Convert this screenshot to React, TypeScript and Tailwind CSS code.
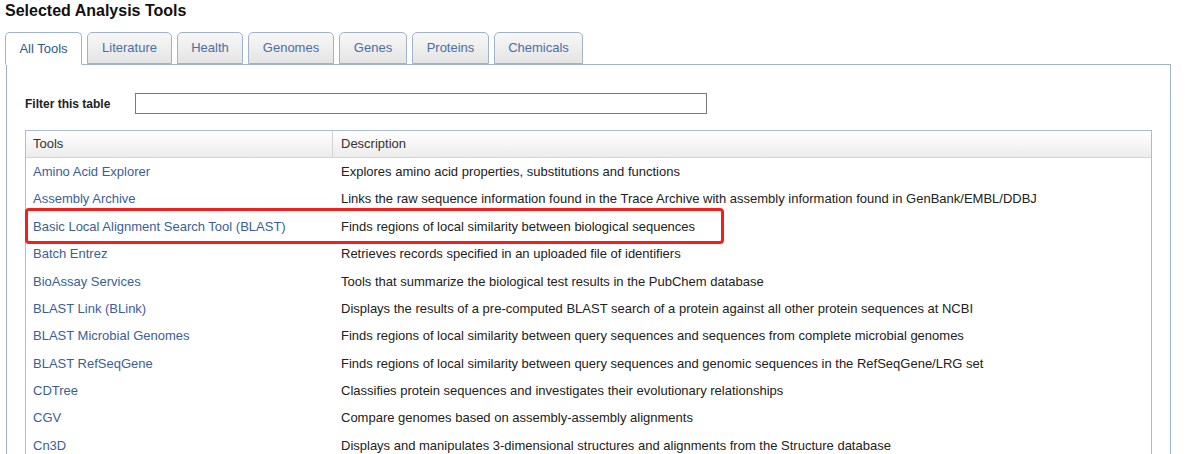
import * as React from "react";

const tabs = [
    { label: "All Tools", w: "w-[77px]", active: true },
    { label: "Literature", w: "w-[85px]" },
    { label: "Health", w: "w-[66px]" },
    { label: "Genomes", w: "w-[86px]" },
    { label: "Genes", w: "w-[68px]" },
    { label: "Proteins", w: "w-[77px]" },
    { label: "Chemicals", w: "w-[89px]" },
];

const rows = [
    ["Amino Acid Explorer", "Explores amino acid properties, substitutions and functions"],
    ["Assembly Archive", "Links the raw sequence information found in the Trace Archive with assembly information found in GenBank/EMBL/DDBJ"],
    ["Basic Local Alignment Search Tool (BLAST)", "Finds regions of local similarity between biological sequences"],
    ["Batch Entrez", "Retrieves records specified in an uploaded file of identifiers"],
    ["BioAssay Services", "Tools that summarize the biological test results in the PubChem database"],
    ["BLAST Link (BLink)", "Displays the results of a pre-computed BLAST search of a protein against all other protein sequences at NCBI"],
    ["BLAST Microbial Genomes", "Finds regions of local similarity between query sequences and sequences from complete microbial genomes"],
    ["BLAST RefSeqGene", "Finds regions of local similarity between query sequences and genomic sequences in the RefSeqGene/LRG set"],
    ["CDTree", "Classifies protein sequences and investigates their evolutionary relationships"],
    ["CGV", "Compare genomes based on assembly-assembly alignments"],
    ["Cn3D", "Displays and manipulates 3-dimensional structures and alignments from the Structure database"],
];

const App: React.FC = () => {
    return (
        <div className="w-[1187px] h-[454px] overflow-hidden bg-white font-['Liberation_Sans',Arial,sans-serif] text-[13px]">
            <h1 className="pl-[5px] pt-[1px] text-[16px] leading-[20px] font-bold text-[#111]">
                Selected Analysis Tools
            </h1>

            {/* tabs */}
            <div className="mt-[11px] pl-[5px] flex gap-[5px] h-[32px] relative z-10">
                {tabs.map((t) => (
                    <div
                        key={t.label}
                        className={`${t.w} h-[32px] flex items-center justify-center rounded-t-[5px] border border-[#9fb4cc] ${
                            t.active
                                ? "bg-white border-b-white h-[33px] text-[#2d5796]"
                                : "bg-gradient-to-b from-[#f7f7f7] via-[#eeeeee] to-[#e4e4e4] text-[#4a6ea8]"
                        }`}
                    >
                        {t.label}
                    </div>
                ))}
            </div>

            {/* panel */}
            <div className="ml-[6px] w-[1165px] h-[400px] border border-[#9fb4cc] px-[18px] pt-[28px]">
                <div className="flex items-center h-[21px]">
                    <label className="w-[110px] text-[12px] font-bold text-[#222]">Filter this table</label>
                    <input
                        type="text"
                        className="w-[572px] h-[21px] border border-[#7a7a7a] bg-white outline-none"
                    />
                </div>

                <div className="mt-[16px] border border-[#a8bdd4] text-[13px]">
                    <div className="flex h-[27px] border-b border-[#d3d3d3] bg-gradient-to-b from-white to-[#ececec] text-[#333]">
                        <div className="w-[306px] pl-[7px] flex items-center">Tools</div>
                        <div className="flex-1 pl-[8px] flex items-center border-l border-[#d3d3d3]">
                            Description
                        </div>
                    </div>
                    {rows.map(([tool, desc], i) => (
                        <div key={tool} className="relative flex h-[27.4px] items-center">
                            <div className="w-[307px] pl-[7px] text-[#3a5e9d]">{tool}</div>
                            <div className="flex-1 pl-[8px] text-[#222]">{desc}</div>
                            {i === 2 && (
                                <div className="absolute -left-[1px] -top-[5px] w-[699px] h-[36px] border-[3px] border-[#f31f1f] rounded-[4px]" />
                            )}
                        </div>
                    ))}
                </div>
            </div>
        </div>
    );
};

export default App;
